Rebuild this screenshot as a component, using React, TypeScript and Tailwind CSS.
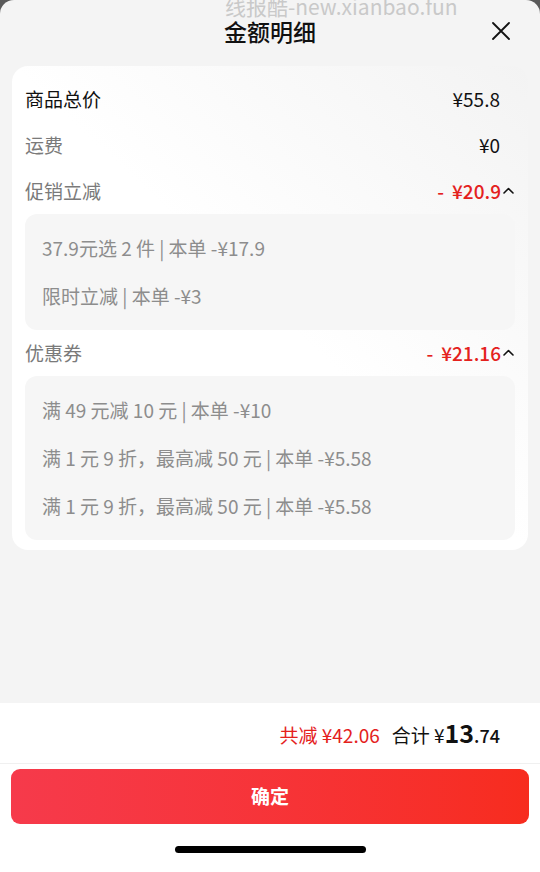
import React from 'react';

const CJK = { fontFamily: '"Noto Sans CJK SC", "Noto Sans", sans-serif' };

const Chevron: React.FC = () => (
  <svg width="13" height="10" viewBox="0 0 13 10" className="ml-[1px]">
    <path d="M2 7 L6.5 2.5 L11 7" fill="none" stroke="#111" strokeWidth="1.6" strokeLinecap="round" strokeLinejoin="round" />
  </svg>
);

const Row: React.FC<{ label: string; value: string; strong?: boolean; red?: boolean }> = ({ label, value, strong, red }) => (
  <div className="h-[46px] flex items-center justify-between pl-[13px] pr-[13px]">
    <span className={`text-[19px] ${strong ? 'text-[#111]' : 'text-[#7a7a7a]'}`}>{label}</span>
    {red ? (
      <span className="flex items-center text-[19px] font-medium text-[#e4211d]">
        <span className="mr-[8px]">-</span>¥{value}
        <Chevron />
      </span>
    ) : (
      <span className="text-[19px] text-[#111] pr-[15px]">¥{value}</span>
    )}
  </div>
);

const DetailBox: React.FC<{ lines: string[] }> = ({ lines }) => (
  <div className="mx-[13px] bg-[#f6f6f6] rounded-[12px] py-[10px] pl-[17px]">
    {lines.map((l, i) => (
      <div key={i} className="h-[48px] flex items-center text-[19px] text-[#8d8d8d] whitespace-pre">
        {l}
      </div>
    ))}
  </div>
);

export default function App() {
  return (
    <div className="w-[540px] h-[872px] bg-[#5a5a5a] overflow-hidden" style={CJK}>
      <div className="relative h-full rounded-t-[14px] bg-[#f4f4f4] flex flex-col overflow-hidden">
        {/* watermark */}
        <div className="absolute left-[225px] top-[-9px] text-[21px] text-[#c9c9c9] whitespace-nowrap">
          线报酷-new.xianbao.fun
        </div>

        {/* Header */}
        <div className="relative h-[62px] flex items-center justify-center">
          <h1 className="text-[23px] font-medium text-[#111]">金额明细</h1>
          <svg className="absolute right-[30px] top-[22px]" width="18" height="18" viewBox="0 0 18 18">
            <path d="M1 1 L17 17 M17 1 L1 17" stroke="#111" strokeWidth="1.8" strokeLinecap="round" />
          </svg>
        </div>

        {/* Card */}
        <div className="mx-[12px] mt-[4px] bg-gradient-to-bl from-[#f3f3f3] via-white to-white rounded-[16px] pt-[10px] pb-[10px]">
          <Row label="商品总价" value="55.8" strong />
          <Row label="运费" value="0" />
          <Row label="促销立减" value="20.9" red />
          <DetailBox lines={['37.9元选 2 件 | 本单 -¥17.9', '限时立减 | 本单 -¥3']} />
          <Row label="优惠券" value="21.16" red />
          <DetailBox
            lines={[
              '满 49 元减 10 元 | 本单 -¥10',
              '满 1 元 9 折，最高减 50 元 | 本单 -¥5.58',
              '满 1 元 9 折，最高减 50 元 | 本单 -¥5.58',
            ]}
          />
        </div>

        <div className="flex-grow" />

        {/* Footer */}
        <div className="h-[169px] bg-white flex flex-col">
          <div className="h-[61px] flex items-center justify-end pr-[40px] border-b border-[#f0f0f0]">
            <div className="flex items-baseline">
              <span className="text-[19px] text-[#e4211d]">共减 ¥42.06</span>
              <span className="ml-[12px] text-[19px] text-[#111]">合计 ¥</span>
              <span className="text-[25px] font-bold text-[#111]">13</span>
              <span className="text-[18px] font-medium text-[#111]">.74</span>
            </div>
          </div>
          <div className="px-[11px] mt-[5px]">
            <button className="w-full h-[55px] rounded-[9px] bg-gradient-to-r from-[#f63a4b] to-[#f72c1e] text-white text-[19px] font-bold">
              确定
            </button>
          </div>
          <div className="flex-grow flex items-center justify-center pt-[2px]">
            <div className="w-[191px] h-[7px] rounded-full bg-black" />
          </div>
        </div>
      </div>
    </div>
  );
}
